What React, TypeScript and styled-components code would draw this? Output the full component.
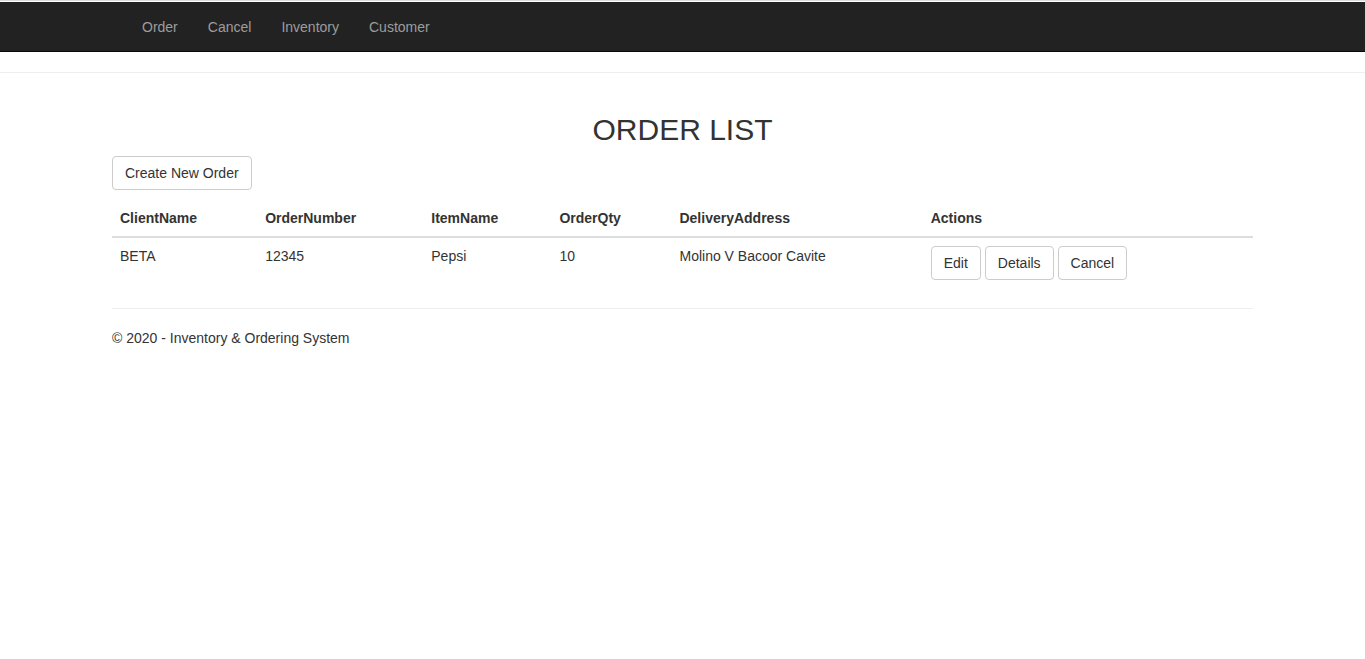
import React from "react";
import styled, { createGlobalStyle } from "styled-components";

const Global = createGlobalStyle`
  html, body { margin: 0; padding: 0; background: #fff; }
  body {
    font-family: "Liberation Sans", Arial, Helvetica, sans-serif;
    font-size: 14px;
    line-height: 1.42857;
    color: #333;
    border-top: 1px solid #dcdcdc;
    padding-top: 1px;
  }
  * { box-sizing: border-box; }
`;

const Navbar = styled.nav`
  height: 50px;
  background: #222;
  border-bottom: 1px solid #080808;
`;

const NavContainer = styled.div`
  width: 1171px;
  margin: 0 auto;
  padding: 0 15px;
  display: flex;
`;

const NavList = styled.ul`
  list-style: none;
  margin: 0;
  padding: 0 0 0 15px;
  display: flex;
`;

const NavLink = styled.a`
  display: block;
  padding: 15px 15px;
  line-height: 20px;
  color: #9d9d9d;
  text-decoration: none;
`;

const Rule = styled.hr`
  margin: 20px 0;
  border: 0;
  border-top: 1px solid #eee;
  height: 0;
`;

const Container = styled.div`
  display: flow-root;
  width: 1171px;
  margin: 0 auto;
  padding: 0 15px;
`;

const Title = styled.h2`
  font-size: 30px;
  line-height: 1.1;
  font-weight: 500;
  text-align: center;
  margin: 20px 0 10px;
`;

const ButtonRow = styled.p`
  margin: 0 0 10px;
`;

const Button = styled.a`
  display: inline-block;
  padding: 6px 12px;
  font-size: 14px;
  line-height: 20px;
  color: #333;
  background: #fff;
  border: 1px solid #ccc;
  border-radius: 4px;
  text-decoration: none;
  white-space: nowrap;
`;

const Actions = styled.div`
  display: flex;
  gap: 4px;
`;

const Table = styled.table`
  width: 100%;
  border-collapse: collapse;
  margin-bottom: 20px;
`;

const Th = styled.th<{ $w: number }>`
  width: ${(p) => p.$w}px;
  text-align: left;
  padding: 8px;
  line-height: 20px;
  font-weight: bold;
  vertical-align: bottom;
  border-bottom: 2px solid #ddd;
`;

const Td = styled.td`
  padding: 8px;
  line-height: 20px;
  vertical-align: top;
  border-top: 1px solid #ddd;
`;

const Footer = styled.footer`
  p {
    margin: 1px 0 10px;
  }
`;

const columns: [string, number][] = [
  ["ClientName", 145],
  ["OrderNumber", 166],
  ["ItemName", 128],
  ["OrderQty", 120],
  ["DeliveryAddress", 251],
  ["Actions", 330],
];

export default function App() {
  return (
    <>
      <Global />
      <Navbar>
        <NavContainer>
          <NavList>
            {["Order", "Cancel", "Inventory", "Customer"].map((l) => (
              <li key={l}>
                <NavLink href="#">{l}</NavLink>
              </li>
            ))}
          </NavList>
        </NavContainer>
      </Navbar>
      <Rule />
      <Container>
        <Title>ORDER LIST</Title>
        <ButtonRow>
          <Button href="#">Create New Order</Button>
        </ButtonRow>
        <Table>
          <thead>
            <tr>
              {columns.map(([c, w]) => (
                <Th key={c} $w={w}>
                  {c}
                </Th>
              ))}
            </tr>
          </thead>
          <tbody>
            <tr>
              <Td>BETA</Td>
              <Td>12345</Td>
              <Td>Pepsi</Td>
              <Td>10</Td>
              <Td>Molino V Bacoor Cavite</Td>
              <Td>
                <Actions>
                  <Button href="#">Edit</Button>
                  <Button href="#">Details</Button>
                  <Button href="#">Cancel</Button>
                </Actions>
              </Td>
            </tr>
          </tbody>
        </Table>
        <Rule />
        <Footer>
          <p>© 2020 - Inventory &amp; Ordering System</p>
        </Footer>
      </Container>
    </>
  );
}
